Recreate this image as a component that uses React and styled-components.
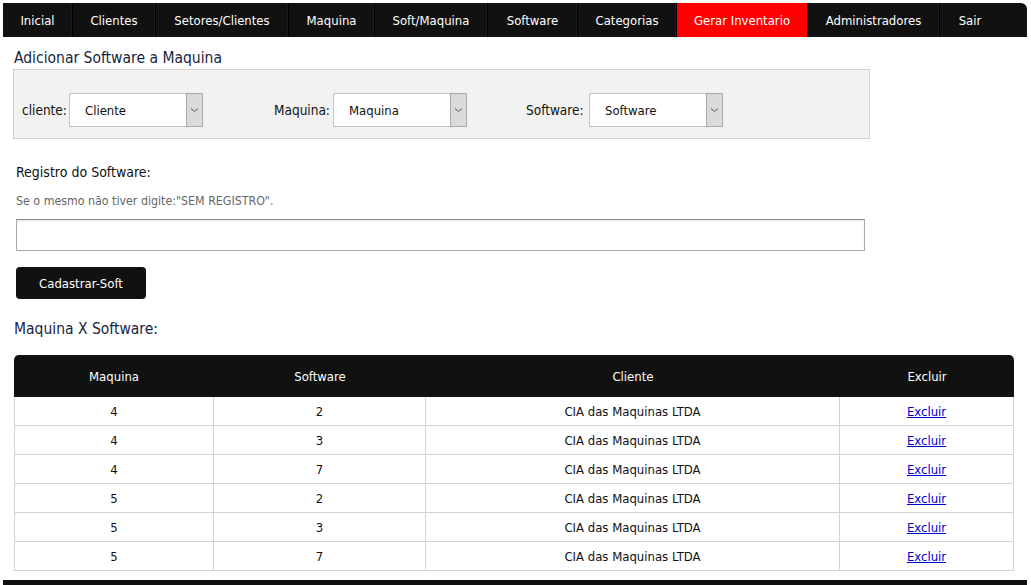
import React from "react";
import styled, { createGlobalStyle } from "styled-components";

const Global = createGlobalStyle`
  html, body { margin: 0; padding: 0; background: #fff; }
  body { font-family: "DejaVu Sans Condensed", "DejaVu Sans", Tahoma, sans-serif; color: #111; }
  * { box-sizing: border-box; }
`;

const Page = styled.div`
  padding: 3px 4px 0 3px;
  display: flex;
  flex-direction: column;
  min-height: 585px;
`;

const Nav = styled.ul`
  list-style: none;
  margin: 0;
  padding: 0;
  display: flex;
  height: 34px;
  background: #111;
  border-top-right-radius: 6px;
`;

const NavItem = styled.li`
  width: ${(p) => p.$w}px;
  flex: none;
  display: flex;
  align-items: center;
  justify-content: center;
  font-size: 13px;
  color: #fff;
  background: ${(p) => (p.$active ? "#ff0000" : "transparent")};
  border-right: 1px solid #000;
  box-shadow: ${(p) => (p.$active ? "none" : "inset -1px 0 0 #1c1c1c")};
  &:last-child {
    border-right: none;
    box-shadow: none;
  }
`;

const Content = styled.div`
  padding: 0 0 0 10px;
  display: flex;
  flex-direction: column;
`;

const Title = styled.h2`
  margin: 13px 0 0 1px;
  font-size: 15.5px;
  font-weight: normal;
  color: #18253f;
  line-height: 16px;
`;

const FilterBox = styled.div`
  margin-top: 3px;
  width: 857px;
  height: 70px;
  background: #f2f2f2;
  border: 1px solid #d2d2d2;
  display: flex;
  align-items: flex-start;
  padding: 23px 0 0 8px;
`;

const Group = styled.div`
  display: flex;
  align-items: center;
  margin-left: ${(p) => p.$ml || 0}px;
`;

const Label = styled.span`
  width: ${(p) => p.$w}px;
  flex: none;
  font-size: 13.5px;
  color: #111;
  white-space: nowrap;
`;

const SelectBox = styled.div`
  width: 134px;
  height: 34px;
  display: flex;
  background: #fff;
  border: 1px solid #c4c4c4;
`;

const SelectText = styled.span`
  flex: 1;
  display: flex;
  align-items: center;
  padding-left: 15px;
  font-size: 13px;
  color: #111;
`;

const Arrow = styled.span`
  width: 17px;
  margin: -1px -1px -1px 0;
  background: #dadada;
  border: 1px solid #a8a8a8;
  display: flex;
  align-items: center;
  justify-content: center;
`;

const FieldLabel = styled.div`
  margin: 24px 0 0 3px;
  font-size: 14px;
  color: #111;
  line-height: 18px;
`;

const Hint = styled.div`
  margin: 13px 0 0 3px;
  font-size: 12.3px;
  color: #666;
  line-height: 14px;
`;

const TextInput = styled.input`
  margin: 11px 0 0 3px;
  width: 849px;
  height: 32px;
  border: 1px solid #a9a9a9;
  border-top-color: #8e8e8e;
  box-shadow: inset 0 1px 2px rgba(0, 0, 0, 0.12);
  background: #fff;
  outline: none;
`;

const Button = styled.button`
  margin: 16px 0 0 3px;
  width: 130px;
  height: 32px;
  background: #111;
  color: #fff;
  border: none;
  border-radius: 4px;
  font-family: inherit;
  font-size: 13px;
  cursor: pointer;
`;

const SubTitle = styled.h3`
  margin: 21px 0 0 1px;
  font-size: 15.5px;
  font-weight: normal;
  color: #18253f;
  line-height: 18px;
`;

const Table = styled.table`
  margin: 17px 0 0 1px;
  width: 1000px;
  border-collapse: separate;
  border-spacing: 0;
  table-layout: fixed;
  font-size: 13px;
`;

const Th = styled.th`
  width: ${(p) => p.$w}px;
  height: 42px;
  background: #111;
  color: #fff;
  font-weight: normal;
  text-align: center;
  padding: 0;
  &:first-child { border-top-left-radius: 5px; }
  &:last-child { border-top-right-radius: 5px; }
`;

const Td = styled.td`
  height: 29px;
  text-align: center;
  padding: 0;
  color: #111;
  border-bottom: 1px solid #d3d3d3;
  border-right: 1px solid #d3d3d3;
  &:first-child { border-left: 1px solid #d3d3d3; }
`;

const Link = styled.a`
  color: #0000cc;
  text-decoration: underline;
  cursor: pointer;
`;

const Footer = styled.div`
  margin-top: 9px;
  height: 10px;
  background: #111;
`;

const navItems = [
  ["Inicial", 70],
  ["Clientes", 83],
  ["Setores/Clientes", 133],
  ["Maquina", 86],
  ["Soft/Maquina", 113],
  ["Software", 90],
  ["Categorias", 99],
  ["Gerar Inventario", 131],
  ["Administradores", 132],
  ["Sair", 60],
];

const rows = [
  [4, 2],
  [4, 3],
  [4, 7],
  [5, 2],
  [5, 3],
  [5, 7],
];

const Chevron = () => (
  <svg width="9" height="6" viewBox="0 0 9 6">
    <path d="M1 1.5 L4.5 4.5 L8 1.5" fill="none" stroke="#555" strokeWidth="1" />
  </svg>
);

const Select = ({ value }) => (
  <SelectBox>
    <SelectText>{value}</SelectText>
    <Arrow>
      <Chevron />
    </Arrow>
  </SelectBox>
);

export default function App() {
  return (
    <>
      <Global />
      <Page>
        <Nav>
          {navItems.map(([t, w]) => (
            <NavItem key={t} $w={w} $active={t === "Gerar Inventario"}>
              {t}
            </NavItem>
          ))}
        </Nav>
        <Content>
          <Title>Adicionar Software a Maquina</Title>
          <FilterBox>
            <Group>
              <Label $w={47}>cliente:</Label>
              <Select value="Cliente" />
            </Group>
            <Group $ml={71}>
              <Label $w={59}>Maquina:</Label>
              <Select value="Maquina" />
            </Group>
            <Group $ml={59}>
              <Label $w={63}>Software:</Label>
              <Select value="Software" />
            </Group>
          </FilterBox>
          <FieldLabel>Registro do Software:</FieldLabel>
          <Hint>Se o mesmo não tiver digite:"SEM REGISTRO".</Hint>
          <TextInput type="text" />
          <div>
            <Button>Cadastrar-Soft</Button>
          </div>
          <SubTitle>Maquina X Software:</SubTitle>
          <Table>
            <thead>
              <tr>
                <Th $w={200}>Maquina</Th>
                <Th $w={212}>Software</Th>
                <Th $w={414}>Cliente</Th>
                <Th $w={174}>Excluir</Th>
              </tr>
            </thead>
            <tbody>
              {rows.map(([m, s], i) => (
                <tr key={i}>
                  <Td>{m}</Td>
                  <Td>{s}</Td>
                  <Td>CIA das Maquinas LTDA</Td>
                  <Td>
                    <Link>Excluir</Link>
                  </Td>
                </tr>
              ))}
            </tbody>
          </Table>
        </Content>
        <Footer />
      </Page>
    </>
  );
}
